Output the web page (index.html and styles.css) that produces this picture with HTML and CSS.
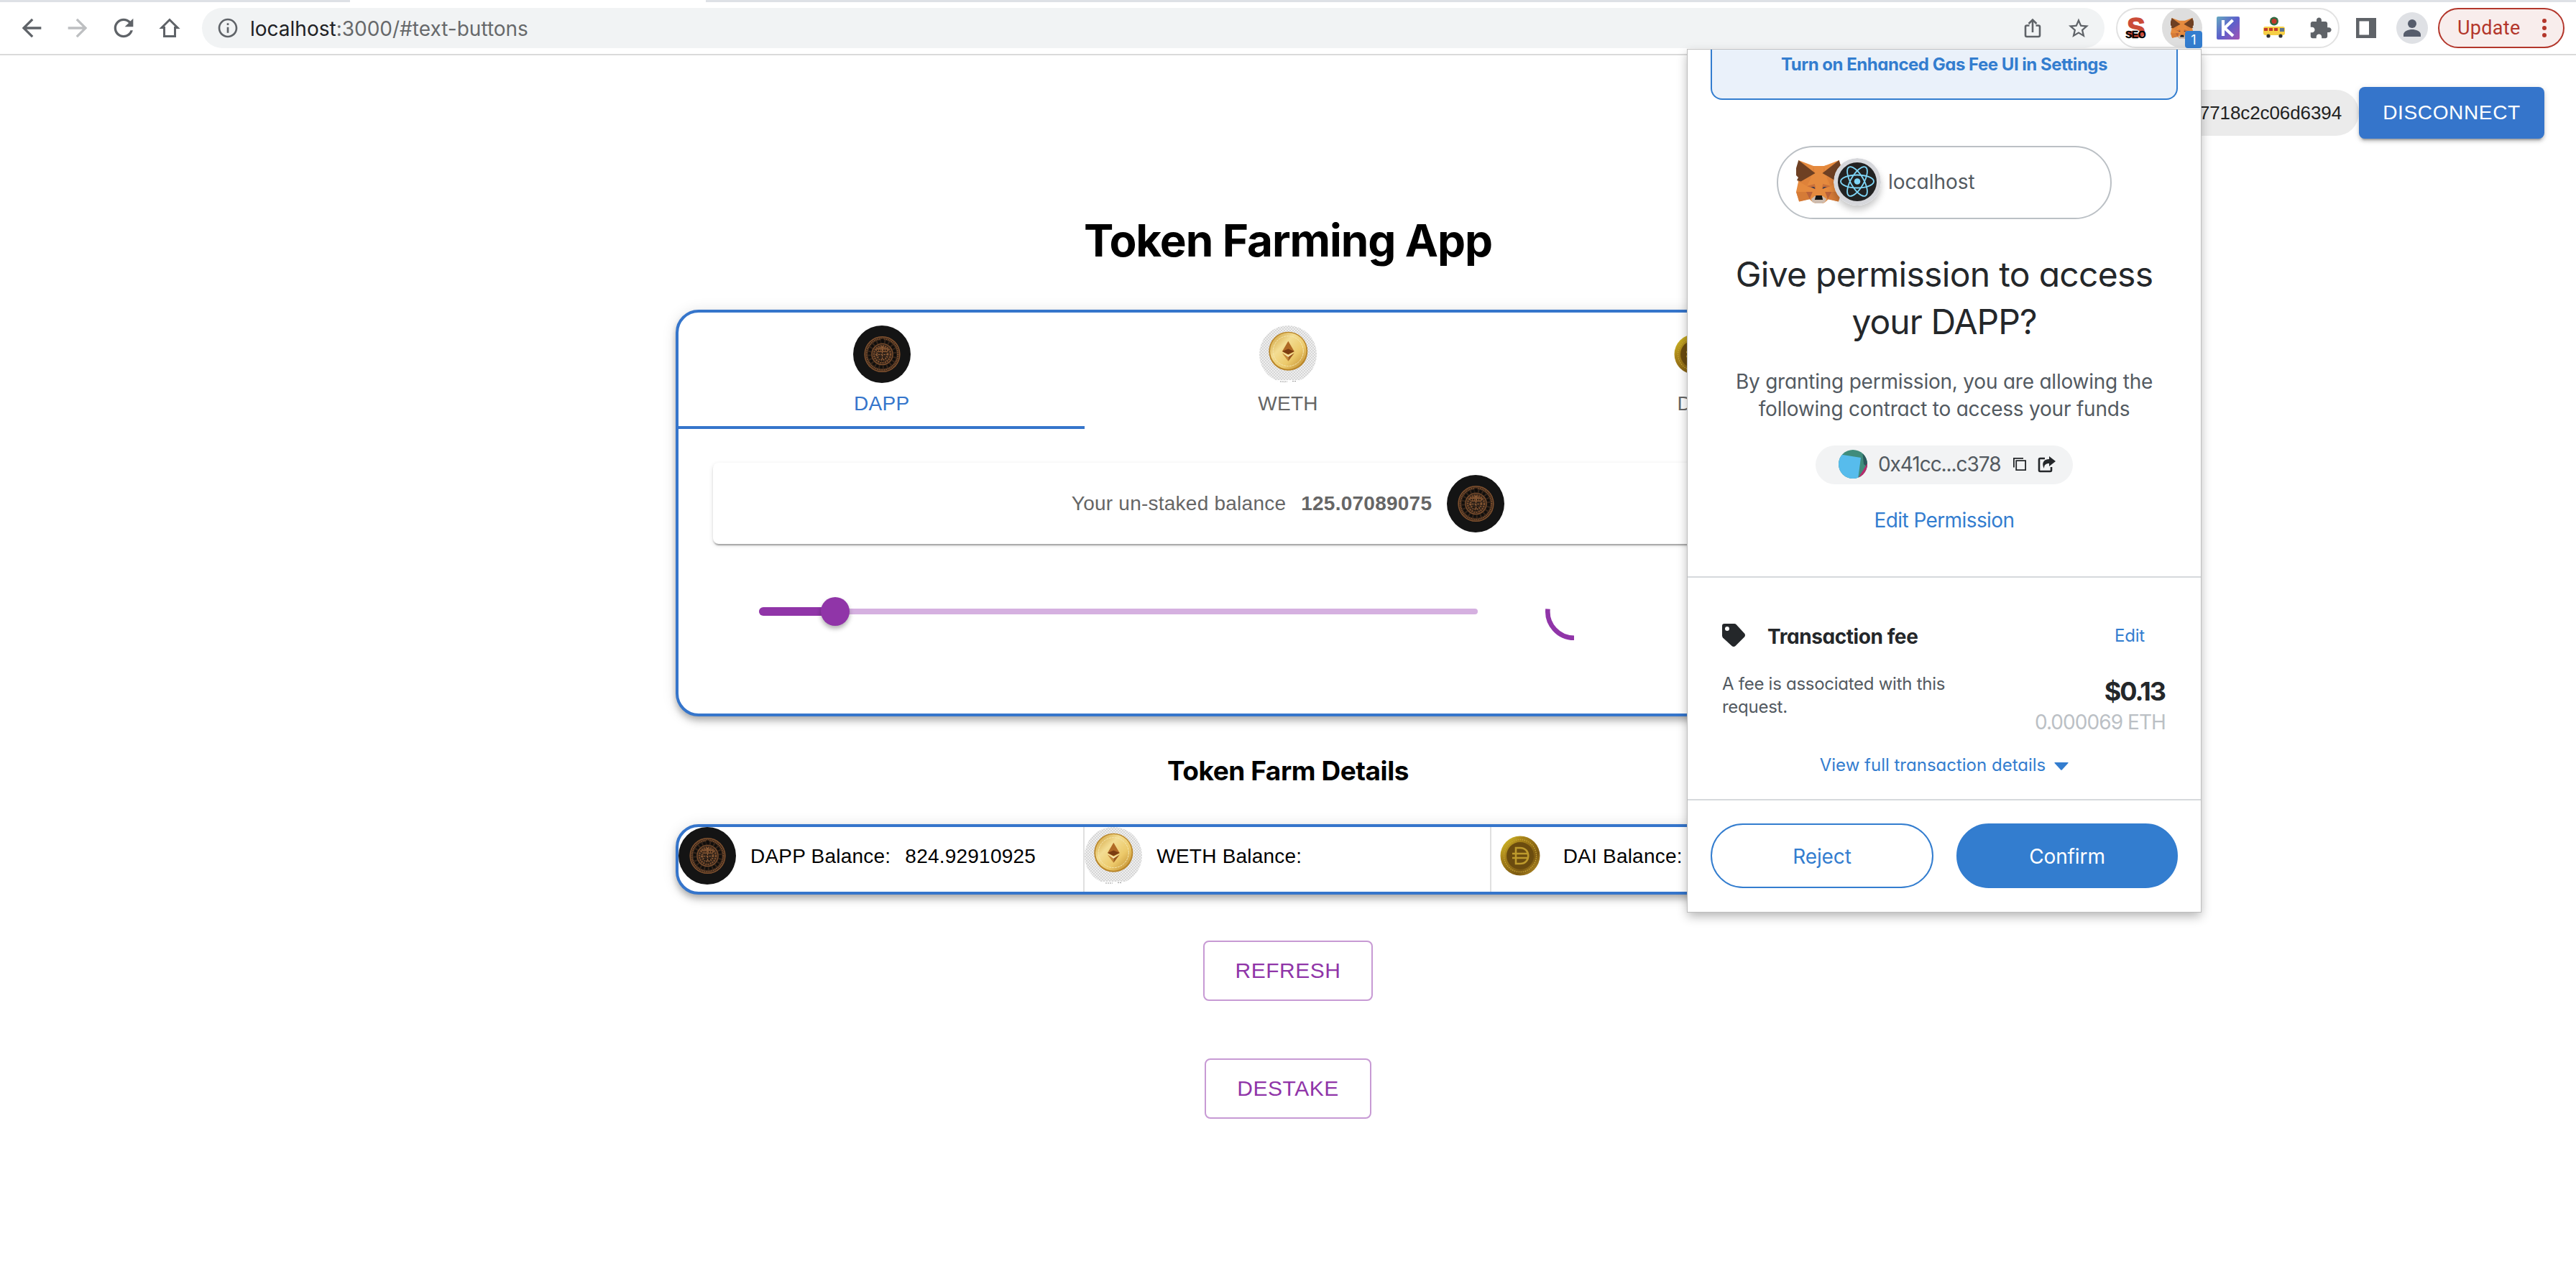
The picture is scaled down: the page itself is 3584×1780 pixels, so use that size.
FILE: index.html
```html
<!DOCTYPE html>
<html lang="en">
<head>
<meta charset="utf-8">
<title>Token Farming App</title>
<link rel="stylesheet" href="styles.css">
</head>
<body>
<svg class="defs" width="0" height="0" aria-hidden="true">
  <defs>
    <pattern id="checker" width="4" height="4" patternUnits="userSpaceOnUse"><rect width="4" height="4" fill="#efefef"/><path d="M0 0h2v2H0zM2 2h2v2H2z" fill="#d6d6d6"/></pattern>
    <linearGradient id="gold" x1="0" y1="0" x2="1" y2="1"><stop offset="0" stop-color="#c9962f"/><stop offset=".35" stop-color="#f3dd93"/><stop offset=".65" stop-color="#ecc96a"/><stop offset="1" stop-color="#b98225"/></linearGradient>
    <linearGradient id="daiGold" x1="0" y1="0" x2="1" y2="1"><stop offset="0" stop-color="#e6d62c"/><stop offset=".3" stop-color="#a8841a"/><stop offset=".7" stop-color="#7d5a12"/><stop offset="1" stop-color="#c9a02c"/></linearGradient>
    <linearGradient id="kGrad" x1="0" y1="0" x2="1" y2="1"><stop offset="0" stop-color="#65a9c0"/><stop offset=".5" stop-color="#5c5fcb"/><stop offset="1" stop-color="#a552b4"/></linearGradient>
  </defs>
  <symbol id="dapp" viewBox="0 0 80 80" preserveAspectRatio="none">
    <circle cx="40" cy="40" r="40" fill="#141414"/>
    <circle cx="40.500" cy="40" r="25" fill="#33241a"/>
    <g fill="none" stroke="#80512e">
      <circle cx="40.500" cy="40" r="24.300" stroke-width="1.500"/>
      <circle cx="40.500" cy="40" r="21.800" stroke-width="2" stroke-dasharray="1.500 1"/>
      <circle cx="40.500" cy="40" r="17.800" stroke="#100e0c" stroke-width="4" stroke-dasharray="3.500 2"/>
      <circle cx="40.500" cy="40" r="14.500" stroke-width="1.200"/>
      <circle cx="40.500" cy="40" r="11.500" stroke-width="2.400" stroke-dasharray="2 1.200"/>
      <circle cx="40.500" cy="40" r="7.500" stroke="#8a5a35" stroke-width="2.600" stroke-dasharray="1.600 1.400"/>
    </g>
    <path d="M30 33l10.500-4L51 33l-4 4h-13z" fill="#7c502f"/>
    <path d="M33 34.500h15M36 45.500h9M37 50h7" stroke="#1a120c" stroke-width="1.300" stroke-dasharray="2 1"/>
    <path d="M40.500 29v18M31 40.500h19" stroke="#9a663c" stroke-width="1.200" stroke-dasharray="2.500 1.300"/>
    <path d="M38.500 18.500h4v5h-4z" fill="#0f0c0a"/>
  </symbol>
  <symbol id="weth" viewBox="0 0 80 80" preserveAspectRatio="none">
    <circle cx="40" cy="40" r="40" fill="url(#checker)"/>
    <path d="M22 76h36q-18 8-36 0z" fill="#fff"/>
    <path d="M29 78h10M46 77.500h5" stroke="#999" stroke-dasharray="2 1"/>
    <circle cx="40.300" cy="35.800" r="27" fill="#b98528"/>
    <circle cx="40.300" cy="35.400" r="25.300" fill="url(#gold)"/>
    <circle cx="40.300" cy="35.600" r="21" fill="none" stroke="#f6e7b0" stroke-width="1" stroke-dasharray="3 1"/>
    <path d="M40.300 21.700L48.700 36l-8.400 4.300L32 36z" fill="#b06a25"/>
    <path d="M40.300 32.500L48.700 36l-8.400 4.300L32 36z" fill="#7c3d12"/>
    <path d="M32 38.500l8.300 4.600v6.700z" fill="#c58838"/><path d="M48.700 38.500l-8.400 4.600v6.700z" fill="#9a591e"/>
    <path d="M32 37.800l8.300 4.200 8.400-4.200-8.400 6z" fill="#fbefc4"/>
  </symbol>
  <symbol id="dai" viewBox="0 0 80 80" preserveAspectRatio="none">
    <circle cx="40" cy="40" r="27.500" fill="url(#daiGold)"/>
    <circle cx="40" cy="40" r="22.500" fill="none" stroke="#c8a534" stroke-width="1.300" stroke-dasharray="1.500 1.500"/>
    <circle cx="40" cy="40" r="19" fill="#6b4c0f"/>
    <path d="M34 29h6c15 0 15 22 0 22h-6zM29 37h23M29 43h23" fill="none" stroke="#bd9a2c" stroke-width="2.600"/>
  </symbol>
  <symbol id="fox" viewBox="0 0 63.400 60" preserveAspectRatio="none">
    <path d="M3.300 0L24.300 8H39L60 0l3.400 11-4 19 4 14-4 13.500-14-3.500-5 4.500-4 2h-8l-5-2-5-4.500-14.400 3.500L0 44l3-14z" fill="#e58a3e"/>
    <path d="M0 44h19l1 10-15.500 3.500zM63.400 44h-19l-1 10 15.500 3.500z" fill="#d57b37"/>
    <path d="M14 44h9l-4 10zM49.400 44h-9l4 10z" fill="#b9623a"/>
    <path d="M24.300 8L20 26l-5 10-13-7 24-11zM39 8l4.400 18 5 10 13-7-24-11z" fill="#de823a"/>
    <path d="M3.300 0l23.400 18L6.700 29.500 1 28l2-4-3-3V11zM60 0L36.700 18l20 11.500 5.700-1.500-2-4 3-3V11z" fill="#6e4023"/>
    <path d="M15 36l11-3 1.500 7-6-1.500zM48.400 36l-11-3-1.500 7 6-1.500z" fill="#c9703a"/>
    <path d="M20.500 37l5 .3 1 2.700zM43 37l-5 .3-1 2.700z" fill="#2b3550"/>
    <path d="M21 54l5-4h11.500l5 4-2 4-4 2h-9l-5-2z" fill="#cdbcaf"/>
    <path d="M27.700 49h8.200l1.500 6H26z" fill="#161616"/>
  </symbol>
</svg>

<header class="browser">
  <div class="tabstrip"><div class="active-tab"></div></div>
  <div class="toolbar">
    <div class="nav">
      <svg viewBox="0 0 24 24" fill="#5f6368"><path d="M20 11H7.830l5.590-5.590L12 4l-8 8 8 8 1.410-1.410L7.830 13H20v-2z"/></svg>
      <svg viewBox="0 0 24 24" fill="#bdbfc1"><path d="M4 13h12.170l-5.590 5.590L12 20l8-8-8-8-1.410 1.410L16.170 11H4v2z"/></svg>
      <svg viewBox="0 0 24 24" fill="#5f6368"><path d="M17.650 6.350C16.200 4.900 14.210 4 12 4c-4.420 0-7.990 3.580-7.990 8s3.570 8 7.990 8c3.730 0 6.840-2.550 7.730-6h-2.080c-.82 2.330-3.040 4-5.650 4-3.310 0-6-2.690-6-6s2.690-6 6-6c1.660 0 3.140.69 4.220 1.780L13 11h7V4l-2.350 2.350z"/></svg>
      <svg viewBox="0 0 40 40" fill="none" stroke="#5f6368" stroke-width="3"><path d="M20 8.500L9 19.500h3.500v12h15v-12H31z"/></svg>
    </div>
    <div class="omnibox">
      <svg class="info" viewBox="0 0 24 24" fill="#5f6368"><path d="M11 17h2v-6h-2v6zm1-15C6.480 2 2 6.480 2 12s4.480 10 10 10 10-4.480 10-10S17.520 2 12 2zm0 18c-4.410 0-8-3.590-8-8s3.590-8 8-8 8 3.590 8 8-3.590 8-8 8zM11 9h2V7h-2v2z"/></svg>
      <span class="url"><b>localhost</b>:3000/#text-buttons</span>
      <svg class="act" viewBox="0 0 40 40" fill="none" stroke="#5f6368" stroke-width="2.600"><path d="M15.500 16.500H12c-1 0-2 .8-2 2V30c0 1.200 1 2 2 2h16c1.200 0 2-.8 2-2V18.500c0-1.200-.8-2-2-2h-3.500M20 26V9M14.500 14L20 8.500l5.500 5.500"/></svg>
      <svg class="act" viewBox="0 0 24 24" fill="#5f6368"><path d="M22 9.240l-7.190-.62L12 2 9.190 8.630 2 9.240l5.460 4.730L5.820 21 12 17.270 18.180 21l-1.630-7.030L22 9.240zM12 15.400l-3.760 2.270 1-4.280-3.320-2.880 4.380-.38L12 6.100l1.710 4.040 4.380.38-3.320 2.880 1 4.280L12 15.400z" transform="translate(1.900 2.200) scale(.84)"/></svg>
    </div>
    <div class="extensions">
      <div class="ext seo"><span class="s">S</span><span class="word">SEO</span></div>
      <div class="ext active"><svg class="mini-fox"><use href="#fox"/></svg><span class="badge">1</span></div>
      <div class="ext"><svg class="k-icon" viewBox="0 0 32 32"><rect width="32" height="32" rx="2" fill="url(#kGrad)"/><path d="M9 5v22M22.500 5L11 16l12 11" fill="none" stroke="#fff" stroke-width="4.200"/></svg></div>
      <div class="ext"><svg class="bus" viewBox="0 0 32 32"><circle cx="16" cy="6.500" r="6" fill="#2e6b43"/><circle cx="16" cy="6.500" r="3.500" fill="#c0392b"/><rect x="1" y="14" width="30" height="12" rx="3" fill="#f6cf45"/><path d="M2 16h5v4H2zM9 16h5v4H9zM16 16h5v4h-5z" fill="#c0392b"/><path d="M24 16h6v5h-6z" fill="#5d7390"/><circle cx="8" cy="27" r="2.600" fill="#333"/><circle cx="25" cy="27" r="2.600" fill="#333"/></svg></div>
      <div class="ext"><svg class="puzzle" viewBox="0 0 24 24" fill="#5f6368"><path d="M20.500 11H19V7c0-1.100-.9-2-2-2h-4V3.500C13 2.120 11.880 1 10.500 1S8 2.120 8 3.500V5H4c-1.100 0-1.990.9-1.990 2v3.800H3.500c1.490 0 2.700 1.210 2.700 2.700s-1.210 2.700-2.700 2.700H2V20c0 1.100.9 2 2 2h3.800v-1.500c0-1.490 1.210-2.700 2.700-2.700s2.700 1.210 2.700 2.700V22H17c1.100 0 2-.9 2-2v-4h1.500c1.380 0 2.500-1.120 2.500-2.500S21.880 11 20.500 11z"/></svg></div>
    </div>
    <svg class="sidebar-icon" viewBox="0 0 28 28"><path d="M0 0h28v28H0zM4.500 4.500v19H18v-19z" fill="#5f6368" fill-rule="evenodd"/></svg>
    <svg class="avatar" viewBox="0 0 44 44"><circle cx="22" cy="22" r="22" fill="#dfe1e5"/><circle cx="22" cy="16" r="6" fill="#565d6c"/><path d="M10 34v-3c0-4.500 7-7 12-7s12 2.500 12 7v3z" fill="#565d6c"/></svg>
    <div class="update"><span>Update</span><i class="dots"></i></div>
  </div>
</header>

<main class="page">
  <div class="account">
    <div class="chip">0x2B5AD5c4795c026514f8317c7718c2c06d6394</div>
    <button class="disconnect">DISCONNECT</button>
  </div>
  <h1>Token Farming App</h1>
  <section class="card">
    <div class="tabs">
      <div class="tab selected"><svg><use href="#dapp"/></svg>DAPP</div>
      <div class="tab"><svg><use href="#weth"/></svg>WETH</div>
      <div class="tab"><svg><use href="#dai"/></svg>DAI</div>
    </div>
    <div class="balance"><span>Your un-staked balance</span><b>125.07089075</b><svg><use href="#dapp"/></svg></div>
    <div class="stake">
      <div class="slider"><div class="rail"></div><div class="track"></div><div class="thumb"></div></div>
      <svg class="spinner" viewBox="0 0 80 80"><path d="M3.500 36.500A36.700 36.700 0 0 0 40 76.700" fill="none" stroke="#9035a8" stroke-width="6.600"/></svg>
    </div>
  </section>
  <h2>Token Farm Details</h2>
  <section class="details">
    <div class="cell"><svg><use href="#dapp"/></svg><span>DAPP Balance:</span><span>824.92910925</span></div>
    <div class="cell"><svg><use href="#weth"/></svg><span>WETH Balance:</span></div>
    <div class="cell"><svg><use href="#dai"/></svg><span>DAI Balance:</span></div>
  </section>
  <button class="outlined refresh">REFRESH</button>
  <button class="outlined destake">DESTAKE</button>
</main>

<aside class="wallet">
  <div class="banner">Turn on Enhanced Gas Fee UI in Settings</div>
  <div class="origin">
    <svg class="fox"><use href="#fox"/></svg>
    <svg class="react" viewBox="0 0 66 66"><circle cx="33" cy="33" r="33" fill="#d6d7db"/><circle cx="33" cy="33" r="27" fill="#222"/><g fill="none" stroke="#7fd6f7" stroke-width="1.800"><ellipse cx="33" cy="32.500" rx="23" ry="9"/><ellipse cx="33" cy="32.500" rx="23" ry="9" transform="rotate(60 33 32.500)"/><ellipse cx="33" cy="32.500" rx="23" ry="9" transform="rotate(120 33 32.500)"/></g><circle cx="33" cy="32.500" r="4.300" fill="#7fd6f7"/></svg>
    <span>localhost</span>
  </div>
  <div class="title"><div class="l1">Give permission to access</div><div class="l2">your DAPP?</div></div>
  <div class="desc">By granting permission, you are allowing the<br>following contract to access your funds</div>
  <div class="address">
    <svg class="jazz" viewBox="0 0 40 40"><defs><clipPath id="round"><circle cx="20" cy="20" r="20"/></clipPath></defs><g clip-path="url(#round)"><path d="M0 0h40v40H0z" fill="#408c7c"/><path d="M33 0h7v24l-5-4z" fill="#2c5a5c"/><path d="M0 6l31 5-4 30H0z" fill="#57bcec"/><path d="M40 19v21H27z" fill="#b92b6c"/></g></svg>
    <span>0x41cc...c378</span>
    <svg class="copy" viewBox="0 0 18 18" fill="none" stroke="#24272a" stroke-width="1.800"><path d="M.9 13.500V.9H14M4.200 4.200h12.900v12.900H4.200z"/></svg>
    <svg class="share" viewBox="0 0 25 23"><path d="M10 3H3.500Q2 3 2 4.500v15Q2 21 3.500 21h14q1.500 0 1.500-1.500V15" fill="none" stroke="#24272a" stroke-width="2.600"/><path d="M16 0l9 7-9 7v-4c-5 0-7 2-7 7-4-7-1-13 7-13z" fill="#24272a"/></svg>
  </div>
  <div class="edit-permission">Edit Permission</div>
  <div class="fee">
    <div class="fee-head">
      <svg viewBox="0 0 32 32"><path d="M3 0h14q1.500 0 2.500 1L31 13.500q2 2.500 0 5L18.500 31q-2.500 2-5 0L1 19.500Q0 18 0 16.500V3Q0 0 3 0z" fill="#24272a"/><circle cx="7" cy="7" r="3" fill="#fff"/></svg>
      <b>Transaction fee</b><span class="link">Edit</span>
    </div>
    <div class="fee-body">
      <div class="note">A fee is associated with this<br>request.</div>
      <div class="amounts"><b>$0.13</b><span>0.000069 ETH</span></div>
    </div>
    <div class="full">View full transaction details<svg viewBox="0 0 20 11"><path d="M1 0h18q1 0 .5 1L11 10.300q-1 1-2 0L.5 1Q0 0 1 0z" fill="#337dcf"/></svg></div>
  </div>
  <div class="actions"><button class="reject">Reject</button><button class="confirm">Confirm</button></div>
</aside>
</body>
</html>
```
FILE: styles.css
```css
* { box-sizing: border-box; }
body { margin: 0; width: 3584px; height: 1780px; overflow: hidden; position: relative; background: #fff; font-family: "Liberation Sans", sans-serif; }
button { font: inherit; padding: 0; margin: 0; border: 0; }
svg { display: block; flex: none; }
.defs { position: absolute; }

/* Browser chrome */
.browser { height: 77px; border-bottom: 2px solid #dadada; background: #fff; font-family: Inter, sans-serif; }
.tabstrip { height: 3px; background: #dee1e6; display: flex; }
.active-tab { margin-left: 487px; width: 495px; background: #fff; }
.toolbar { height: 72px; display: flex; align-items: center; }
.nav { display: flex; gap: 24px; margin-left: 24px; }
.nav svg { width: 40px; height: 40px; }
.omnibox { margin-left: 25px; width: 2647px; height: 56px; border-radius: 28px; background: #f1f3f4; display: flex; align-items: center; padding: 0 16px 0 20px; }
.info { width: 32px; height: 32px; margin-right: 15px; }
.url { font-size: 28px; color: #67696b; flex: 1; padding-top: 1px; }
.url b { font-weight: 400; color: #202124; }
.act { width: 40px; height: 40px; margin-left: 24px; }
.extensions { margin-left: 16px; width: 311px; height: 56px; border: 2px solid #e2e2e2; border-radius: 28px; display: flex; align-items: center; gap: 8px; }
.ext { width: 56px; height: 56px; flex: none; border-radius: 28px; display: flex; align-items: center; justify-content: center; position: relative; }
.ext:first-child { margin-left: -2px; }
.ext.active { background: #dedede; }
.seo { font-family: "Liberation Sans", sans-serif; font-weight: 700; }
.seo .s { color: #cb4b38; font-size: 38px; line-height: 38px; -webkit-text-stroke: 1.5px #cb4b38; }
.seo .word { position: absolute; z-index: 1; left: 13px; top: 29px; font-size: 14px; line-height: 16px; color: #000; -webkit-text-stroke: .3px #000; letter-spacing: -.5px; }
.mini-fox { width: 32px; height: 29px; }
.badge { position: absolute; left: 32px; top: 32px; width: 24px; height: 24px; border-radius: 4px; background: #337dcf; color: #fff; font-size: 18px; line-height: 26px; text-align: center; }
.k-icon { width: 32px; height: 32px; }
.bus { width: 32px; height: 32px; }
.puzzle { width: 33px; height: 33px; }
.sidebar-icon { width: 28px; height: 28px; margin-left: 23px; }
.avatar { width: 44px; height: 44px; margin-left: 28px; }
.update { margin-left: 14px; width: 176px; height: 56px; border: 2px solid #b3362b; border-radius: 28px; background: #f8edec; color: #b3362b; display: flex; align-items: center; padding-left: 25px; font: 27px/56px Roboto, sans-serif; letter-spacing: .3px; }
.dots { width: 6px; height: 6px; border-radius: 3px; margin-left: 30px; background: #b3362b; box-shadow: 0 -10px #b3362b, 0 10px #b3362b; }

/* Page */
.page { display: flex; flex-direction: column; align-items: center; font-size: 28px; }
.account { align-self: stretch; display: flex; justify-content: flex-end; align-items: center; padding: 44px 44px 0 0; }
.chip { height: 64px; line-height: 65px; border-radius: 32px; background: #ebebeb; padding: 0 24px; font-size: 26px; letter-spacing: -.1px; color: #222; }
.disconnect { width: 258px; height: 72px; border-radius: 8px; background: #3575cb; color: #fff; font-size: 28px; letter-spacing: .65px; box-shadow: 0 6px 2px -4px rgba(0,0,0,.2), 0 4px 4px rgba(0,0,0,.14), 0 2px 10px rgba(0,0,0,.12); }
h1, h2 { font-family: Inter, sans-serif; font-weight: 700; color: #000; }
h1 { margin: 102px 0 56px; font-size: 62px; line-height: 80px; letter-spacing: -1.1px; }
h2 { margin: 52px 0 50px; font-size: 37px; line-height: 48px; letter-spacing: -.45px; }
.card, .details { width: 1704px; border: 4px solid #3575cb; border-radius: 32px; background: #fff; box-shadow: 0 4px 8px -2px rgba(0,0,0,.2), 0 8px 10px rgba(0,0,0,.14), 0 2px 20px rgba(0,0,0,.12); }
.card { height: 566px; }
.tabs { display: grid; grid-template-columns: repeat(3, 1fr); height: 162px; }
.tab { display: flex; flex-direction: column; align-items: center; gap: 12px; padding-top: 18px; line-height: 33px; letter-spacing: .3px; color: #666; border-bottom: 4px solid transparent; }
.tab.selected { color: #3575cb; border-color: #3575cb; }
.tab svg, .balance svg { width: 80px; height: 80px; }
.balance { margin: 47px 48px 0; height: 113px; border-radius: 8px; display: flex; align-items: center; justify-content: center; gap: 21px; color: #666; letter-spacing: .24px; box-shadow: 0 4px 2px -2px rgba(0,0,0,.2), 0 2px 2px rgba(0,0,0,.14), 0 2px 6px rgba(0,0,0,.12); }
.stake { margin: 54px 0 0 112px; display: flex; align-items: center; gap: 94px; }
.slider { position: relative; width: 1000px; height: 12px; display: flex; align-items: center; }
.rail { width: 1000px; height: 8px; border-radius: 4px; background: #d5b0e0; }
.track { position: absolute; left: 0; top: 0; width: 106px; height: 12px; border-radius: 6px; background: #9035a8; }
.thumb { position: absolute; left: 86px; top: -14px; width: 40px; height: 40px; border-radius: 50%; background: #9035a8; box-shadow: 0 4px 6px rgba(0,0,0,.3); }
.spinner { width: 80px; height: 80px; }
.details { height: 98px; display: grid; grid-template-columns: repeat(3, 1fr); overflow: hidden; }
.cell { display: flex; align-items: flex-start; line-height: 81px; letter-spacing: .22px; color: #000; border-right: 2px solid #e0e0e0; }
.cell:last-child { border: 0; }
.cell svg { width: 80px; height: 80px; }
.cell span { margin-left: 20px; }
.outlined { border: 2px solid #c79ad4; border-radius: 8px; background: #fff; color: #9035a8; font-size: 30px; letter-spacing: .5px; }
.refresh { margin-top: 64px; width: 236px; height: 84px; }
.destake { margin-top: 80px; width: 232px; height: 84px; }

/* Wallet popup */
.wallet { position: absolute; left: 2348px; top: 69px; width: 714px; height: 1200px; background: #fff; color: #24272a; font-family: Inter, sans-serif; font-feature-settings: "cv11" 1; font-size: 28px; box-shadow: 0 0 0 1px #bdbdbd, 0 6px 14px rgba(0,0,0,.3); }
.banner { height: 70px; margin: 0 32px; padding-top: 5px; border: 2px solid #337dcf; border-top: 0; border-radius: 0 0 16px 16px; background: #eaf1fa; color: #337dcf; font-weight: 700; font-size: 24px; line-height: 32px; letter-spacing: -.48px; text-align: center; }
.origin { width: 466px; height: 102px; margin: 64px auto 0; border: 2px solid #bbc0c5; border-radius: 51px; display: flex; align-items: center; padding: 0 0 3px 25px; color: #535a61; }
.origin span { padding-top: 1px; }
.fox { width: 63px; height: 60px; }
.react { width: 66px; height: 66px; margin: 0 10px 0 -11px; border-radius: 50%; box-shadow: 0 6px 10px rgba(0,0,0,.22); }
.title { margin-top: 44px; font-size: 48px; line-height: 66px; text-align: center; }
.l1 { letter-spacing: -.7px; }
.l2 { letter-spacing: -.95px; }
.desc { margin-top: 31px; line-height: 38px; text-align: center; letter-spacing: -.22px; color: #535a61; }
.address { width: 358px; height: 54px; margin: 32px auto 0; border-radius: 27px; background: #f2f3f4; display: flex; align-items: center; padding: 0 0 2px 32px; color: #535a61; letter-spacing: -1.05px; }
.jazz { width: 40px; height: 40px; margin-right: 15px; }
.copy { width: 18px; height: 18px; margin: 0 16px 0 18px; }
.share { width: 25px; height: 23px; }
.edit-permission { margin-top: 30px; line-height: 40px; text-align: center; color: #337dcf; letter-spacing: -.6px; }
.fee { margin-top: 58px; height: 310px; border-top: 2px solid #d6d9dc; padding: 64px 48px 0; }
.fee-head { height: 32px; display: flex; align-items: center; gap: 31px; }
.fee-head svg { width: 32px; height: 32px; }
.fee-head b { letter-spacing: -.42px; padding-top: 3px; }
.link { margin: 0 30px 0 auto; padding-top: 1px; font-size: 24px; color: #337dcf; letter-spacing: -.2px; }
.fee-body { margin-top: 36px; height: 90px; display: flex; justify-content: space-between; }
.note { font-size: 24px; line-height: 32px; letter-spacing: -.27px; color: #535a61; }
.amounts { padding-top: 4px; display: flex; flex-direction: column; align-items: flex-end; }
.amounts b { font-size: 36px; line-height: 44px; letter-spacing: -2px; margin-right: 2px; }
.amounts span { line-height: 42px; color: #bbc0c5; letter-spacing: -.93px; margin-right: 1px; }
.full { margin-top: 23px; display: flex; align-items: center; justify-content: center; gap: 12px; font-size: 24px; line-height: 32px; color: #337dcf; }
.full svg { width: 20px; height: 11px; margin-top: 2px; }
.actions { border-top: 2px solid #d6d9dc; padding: 32px; display: grid; grid-template-columns: 310px 308px; gap: 32px; }
.actions button { height: 90px; border-radius: 45px; border: 2px solid #337dcf; color: #337dcf; background: #fff; font-feature-settings: inherit; letter-spacing: -.1px; padding-top: 1px; }
.actions .confirm { background: #337dcf; color: #fff; }
```
